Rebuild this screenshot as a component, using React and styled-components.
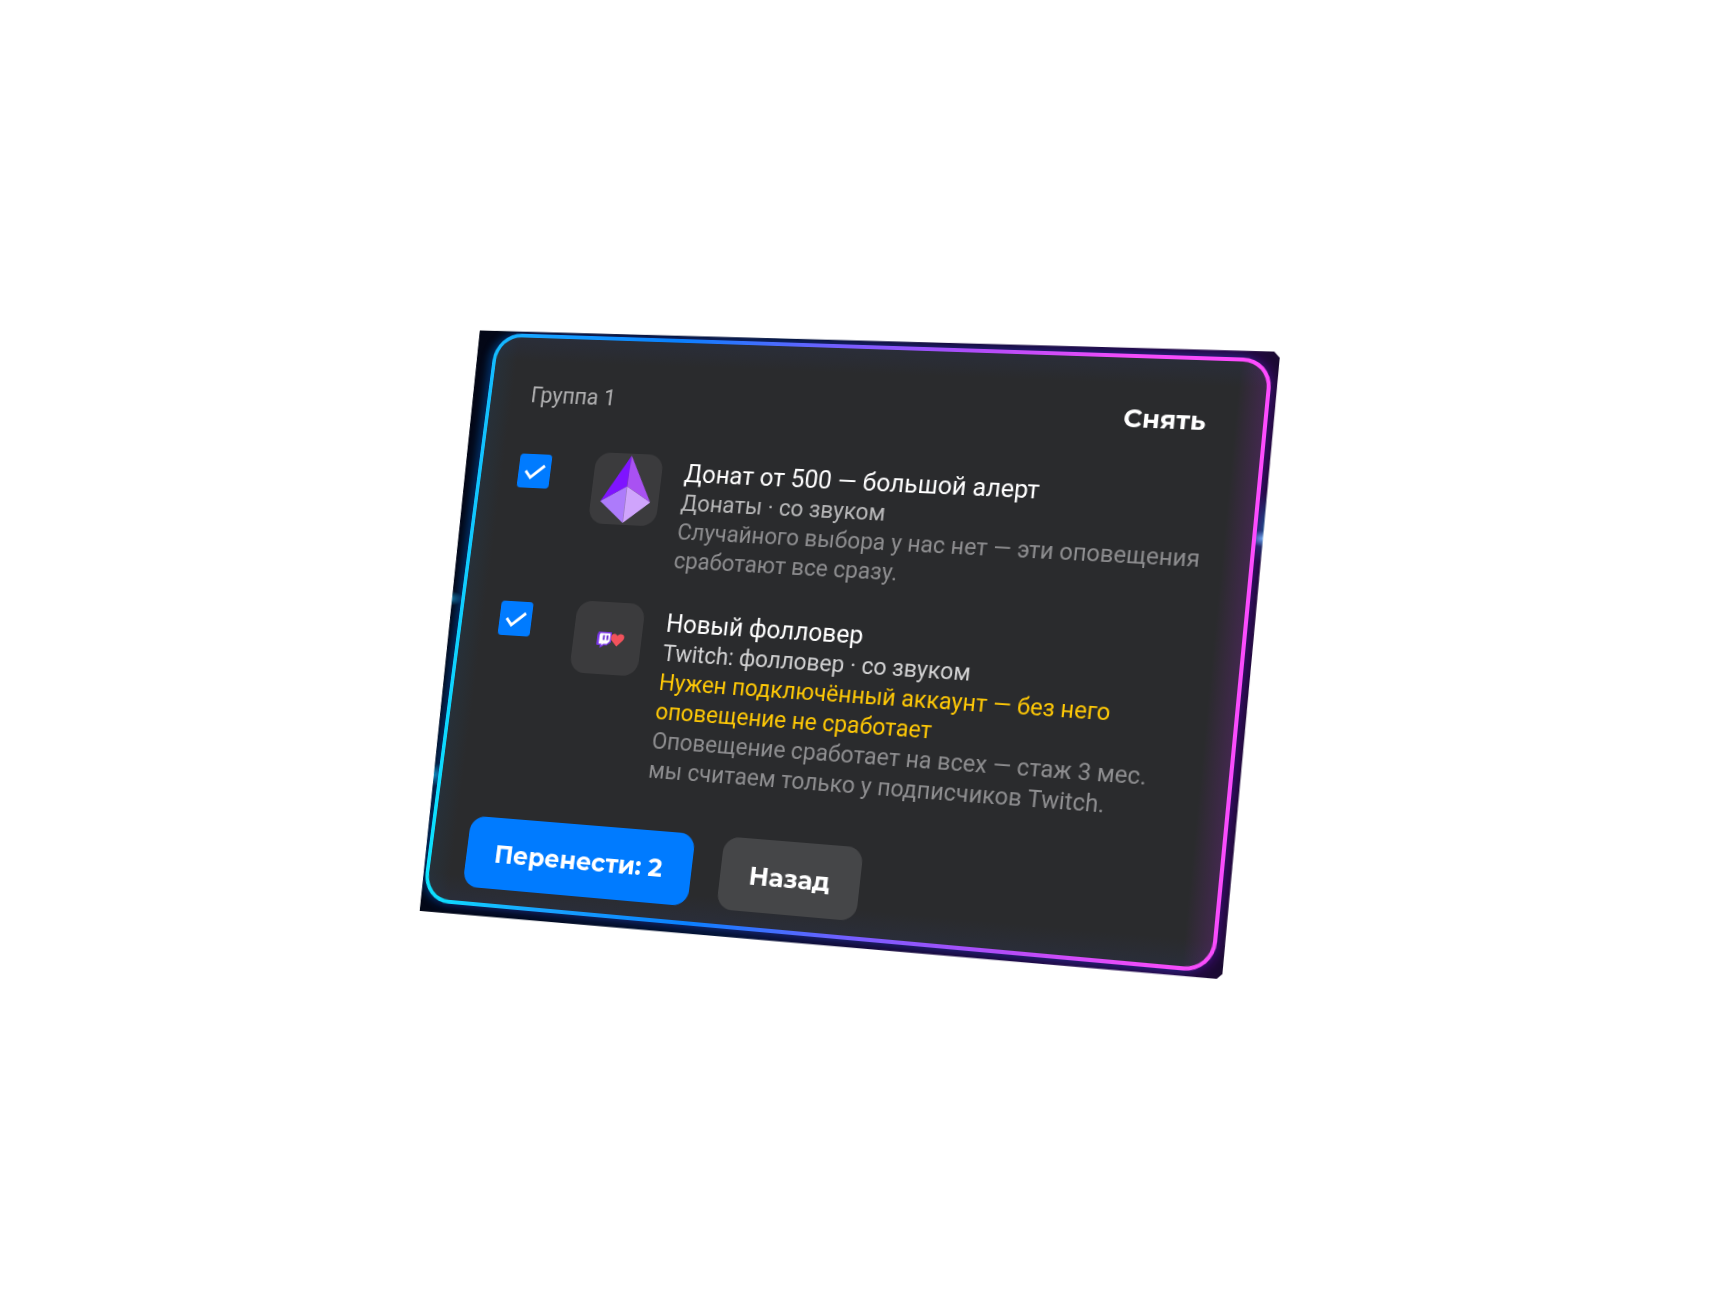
import { useState } from "react";
import styled, { createGlobalStyle } from "styled-components";

const alerts = [
  {
    id: "donate",
    title: "Донат от 500 — большой алерт",
    source: "Донаты · со звуком",
    note: "Случайного выбора у нас нет — эти оповещения сработают все сразу.",
    Icon: CrystalIcon,
  },
  {
    id: "follower",
    title: "Новый фолловер",
    source: "Twitch: фолловер · со звуком",
    bright: true,
    warning: "Нужен подключённый аккаунт — без него оповещение не сработает",
    note: "Оповещение сработает на всех — стаж 3 мес.\nмы считаем только у подписчиков Twitch.",
    Icon: FollowerIcon,
  },
];

function CrystalIcon() {
  return (
    <svg viewBox="0 0 76 76" aria-hidden="true">
      <path d="M40 2 L11 52 L39 35 Z" fill="#7f14ff" />
      <path d="M40 2 L67 51 L39 35 Z" fill="#a951f2" />
      <path d="M11 52 L39 35 L39 74 Z" fill="#ad7bfb" />
      <path d="M67 51 L39 35 L39 74 Z" fill="#cfa4fc" />
    </svg>
  );
}

function FollowerIcon() {
  return (
    <svg viewBox="0 0 76 76" aria-hidden="true">
      <path
        d="M28 32 H42 V42 L38 45 H35 L31 48 V45 H27 V35 Z"
        fill="#7a35e8"
        stroke="#7a35e8"
        strokeWidth="1"
      />
      <path d="M30 33 H41 V41 L38 44 H34 L32 46 V44 H29 V35 Z" fill="#fff" />
      <path d="M34 35 V40 M38 35 V40" stroke="#6a2fd0" strokeWidth="2" />
      <path
        d="M49 46 L43 40 C40 35 45 30 49 35 C53 30 60 35 55 40 Z"
        fill="#f2525c"
      />
    </svg>
  );
}

const App = () => {
  const [selected, setSelected] = useState(["donate", "follower"]);

  const onToggle = (id) => {
    setSelected((prev) =>
      prev.includes(id) ? prev.filter((item) => item !== id) : [...prev, id]
    );
  };

  return (
    <Page>
      <GlobalStyle />
      <Backdrop>
        <Frame>
          <Body>
            <Header>
              <GroupName>Группа 1</GroupName>
              <Button type="button" $variant="text" onClick={() => setSelected([])}>
                Снять
              </Button>
            </Header>
            <List>
              {alerts.map(({ id, title, source, bright, warning, note, Icon }) => (
                <Row key={id}>
                  <Check>
                    <input
                      type="checkbox"
                      id={id}
                      checked={selected.includes(id)}
                      onChange={() => onToggle(id)}
                    />
                    <svg viewBox="0 0 36 36" aria-hidden="true">
                      <path d="M8 18 L14 25 L29 12" />
                    </svg>
                  </Check>
                  <Tile>
                    <Icon />
                  </Tile>
                  <Texts>
                    <Title htmlFor={id}>{title}</Title>
                    <Line $color={bright ? "#d2d2d3" : "#b8b8b9"}>{source}</Line>
                    {warning && <Line $color="#ffc906">{warning}</Line>}
                    <Line $color="#8e8e90">{note}</Line>
                  </Texts>
                </Row>
              ))}
            </List>
            <Actions>
              <Button type="button" $variant="primary">
                Перенести: {selected.length}
              </Button>
              <Button type="button">Назад</Button>
            </Actions>
          </Body>
        </Frame>
      </Backdrop>
    </Page>
  );
};

export default App;

const GlobalStyle = createGlobalStyle`
  * {
    box-sizing: border-box;
  }
  body {
    margin: 0;
    background: #fff;
    font-family: Roboto, "Liberation Sans", sans-serif;
  }
`;

const Page = styled.main`
  min-height: 100vh;
  display: flex;
  align-items: center;
  justify-content: center;
  padding: 0 58px 24px 0;
  overflow: hidden;
`;

const Backdrop = styled.section`
  flex: 0 1 857px;
  padding: 7px 8px 10px 19px;
  background:
    radial-gradient(ellipse 18px 8px at 4px 292px, #1a8cba, transparent),
    radial-gradient(ellipse 14px 12px at 14px 477px, #1895b8, transparent),
    radial-gradient(ellipse 16px 8px at calc(100% - 2px) 186px, #6ab8f0, transparent),
    radial-gradient(ellipse 14px 36px at 100% 176px, #14568c, transparent),
    linear-gradient(90deg, #030716 0%, #031433 40%, #160a38 60%, #270a4a 94%, #1a0a30 100%);
  transform: perspective(3560px) rotateX(10.8deg) rotateY(-18.2deg) rotateZ(6.8deg);
  clip-path: polygon(
    0 5px,
    calc(100% - 8px) 0,
    calc(100% - 2px) 6px,
    100% calc(100% - 10px),
    calc(100% - 5px) calc(100% - 5px),
    18px 100%
  );
`;

const Frame = styled.div`
  padding: 4px;
  border-radius: 30px;
  background: linear-gradient(
    82deg,
    #0ce6ff 0%,
    #18a4ff 14%,
    #0a80ff 32%,
    #7a5cff 52%,
    #b44cf8 68%,
    #f24cfa 84%,
    #ff4cff 100%
  );
  box-shadow:
    -5px 0 9px rgba(0, 100, 200, 0.4),
    5px 0 9px rgba(110, 20, 190, 0.3);
`;

const Body = styled.div`
  padding: 24px 29px 15px 39px;
  border-radius: 26px;
  background:
    linear-gradient(270deg, rgba(150, 30, 190, 0.22), transparent 28px),
    linear-gradient(90deg, rgba(20, 80, 130, 0.14), transparent 24px),
    linear-gradient(180deg, rgba(40, 60, 130, 0.14), transparent 26px),
    linear-gradient(0deg, rgba(40, 60, 130, 0.14), transparent 26px),
    #2a2b2d;
`;

const Header = styled.header`
  display: flex;
  align-items: center;
  justify-content: space-between;
  padding-left: 6px;
  margin-bottom: 22px;
`;

const GroupName = styled.h2`
  margin: 0;
  color: #b0b0b1;
  font-size: 24px;
  font-weight: 400;
  line-height: 30px;
`;

const List = styled.ul`
  display: flex;
  flex-direction: column;
  gap: 32px;
  margin: 0 0 46px;
  padding: 0 0 0 3px;
  list-style: none;
`;

const Row = styled.li`
  display: flex;
  align-items: flex-start;
`;

const Check = styled.span`
  display: grid;
  flex: none;
  width: 36px;
  height: 36px;
  margin: 5px 49px 0 0;

  input,
  svg {
    grid-area: 1 / 1;
    width: 36px;
    height: 36px;
    margin: 0;
  }

  input {
    appearance: none;
    border: 2px solid #007bff;
    border-radius: 4px;
    cursor: pointer;
  }

  input:checked {
    background: #007bff;
  }

  svg {
    fill: none;
    stroke: #fff;
    stroke-width: 3;
    pointer-events: none;
    visibility: hidden;
  }

  input:checked + svg {
    visibility: visible;
  }
`;

const Tile = styled.span`
  flex: none;
  width: 75px;
  height: 75px;
  margin-right: 25px;
  border-radius: 16px;
  background: #3b3b3d;

  svg {
    display: block;
    width: 100%;
    height: 100%;
  }
`;

const Texts = styled.div`
  flex: 1;
  min-width: 0;
  padding-top: 2px;
`;

const Title = styled.label`
  display: block;
  color: #fff;
  font-size: 26px;
  line-height: 32px;
  cursor: pointer;
`;

const Line = styled.p`
  margin: 0;
  color: ${({ $color }) => $color};
  font-size: 24px;
  line-height: 30px;
  white-space: pre-line;
`;

const Actions = styled.footer`
  display: flex;
  gap: 31px;
`;

const buttonColors = {
  primary: "#007bff",
  text: "transparent",
};

const Button = styled.button`
  height: 73px;
  padding: 0 ${({ $variant }) => ($variant === "text" ? "28px" : "31px")};
  border: none;
  border-radius: 16px;
  background: ${({ $variant }) => buttonColors[$variant] || "#454648"};
  color: #fff;
  font-family: Montserrat, Inter, sans-serif;
  font-size: 26px;
  font-weight: 700;
  cursor: pointer;
`;
